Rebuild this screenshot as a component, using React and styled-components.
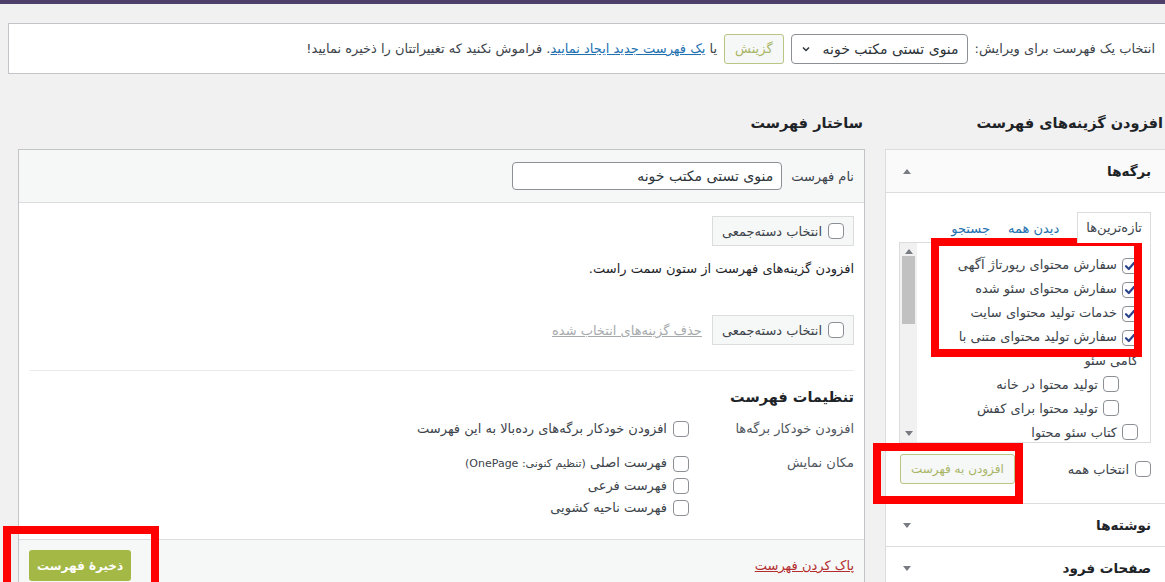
import React from "react";
import styled, { createGlobalStyle } from "styled-components";

const Global = createGlobalStyle`
  html, body {
    margin: 0;
    padding: 0;
    background: #f1f1f1;
    overflow: hidden;
  }
  body {
    font-family: "DejaVu Sans", "Noto Sans", sans-serif;
    font-size: 13px;
    color: #3c434a;
  }
`;

const Root = styled.div`
  position: relative;
  height: 582px;
  overflow: hidden;
  direction: rtl;
`;

const AdminBar = styled.div`
  height: 4px;
  background: #4f3f6b;
`;

const Wrap = styled.div`
  padding: 19px 0 0 8px;
`;

const Notice = styled.div`
  display: flex;
  align-items: center;
  gap: 7px;
  height: 49px;
  padding: 0 10px;
  background: #fff;
  border: 1px solid #c3c4c7;
  margin-right: -1px;
  white-space: nowrap;
`;

const FakeSelect = styled.div`
  display: flex;
  align-items: center;
  justify-content: space-between;
  width: 158px;
  height: 28px;
  padding: 0 8px 0 9px;
  border: 1px solid #8c8f94;
  border-radius: 4px;
  font-size: 14px;
  color: #2c3338;
`;

const GhostButton = styled.span`
  display: inline-flex;
  align-items: center;
  justify-content: center;
  height: 28px;
  padding: 0 10px;
  border: 1px solid #b9c584;
  border-radius: 3px;
  background: #f6f7f7;
  color: #a9b667;
  font-size: 13px;
`;

const Link = styled.a`
  color: ${(p) => p.$color || "#2271b1"};
  text-decoration: underline;
  cursor: pointer;
`;

const Columns = styled.div`
  display: flex;
  align-items: flex-start;
  gap: 20px;
  margin-left: 10px;
`;

const Column = styled.div`
  display: flex;
  flex-direction: column;
  width: ${(p) => (p.$width ? p.$width + "px" : "auto")};
  flex: ${(p) => (p.$width ? "none" : "1")};
`;

const Heading = styled.h2`
  margin: 38px 2px 15px 0;
  font-size: 14.5px;
  line-height: 22px;
  font-weight: 700;
  color: #1d2327;
`;

/* right column: accordion of item sources */

const Accordion = styled.div`
  background: #fff;
  border: 1px solid #dcdcde;
  border-right: none;
`;

const SectionHeader = styled.div`
  display: flex;
  align-items: center;
  justify-content: space-between;
  height: 42px;
  padding: 0 14px 0 17px;
  background: ${(p) => (p.$open ? "#fafafa" : "#fff")};
  border-top: ${(p) => (p.$first ? "none" : "1px solid #dcdcde")};
  font-size: 13.5px;
  font-weight: 700;
  color: #1d2327;
`;

const Arrow = styled.span`
  width: 0;
  height: 0;
  border-left: 4px solid transparent;
  border-right: 4px solid transparent;
  border-${(p) => (p.$up ? "bottom" : "top")}: 5px solid #787c82;
`;

const SectionBody = styled.div`
  border-top: 1px solid #dcdcde;
  padding: 19px 14px 19px 13px;
`;

const Tabs = styled.div`
  display: flex;
  align-items: flex-end;
  gap: 18px;
  height: 30px;
`;

const Tab = styled.span`
  display: flex;
  align-items: center;
  height: 29px;
  padding: 0 8px;
  border: 1px solid #dcdcde;
  border-bottom: 1px solid #fff;
  margin-bottom: -1px;
  background: #fff;
  color: #3c434a;
  position: relative;
  z-index: 1;
`;

const TabLink = styled.a`
  color: #2271b1;
  text-decoration: none;
  line-height: 22px;
  padding-bottom: 2px;
`;

const ListBox = styled.div`
  display: flex;
  height: 199px;
  border: 1px solid #dcdcde;
  overflow: hidden;
`;

const ListContent = styled.ul`
  flex: 1;
  list-style: none;
  margin: 0;
  padding: 10px 12px 0 0;
  overflow: hidden;
  text-align: right;
`;

const SubList = styled.ul`
  list-style: none;
  margin: 0 19px 0 0;
  padding: 0;
`;

const Item = styled.li`
  display: block;
  line-height: 24px;
  font-size: 13px;
  color: #3c434a;
  & > span:first-child {
    display: inline-flex;
    vertical-align: -3px;
    margin-left: 5px;
  }
`;

const WrappedLine = styled.span`
  display: block;
  text-align: right;
`;

const Scrollbar = styled.div`
  display: flex;
  flex-direction: column;
  align-items: center;
  justify-content: space-between;
  width: 17px;
  background: #f1f1f1;
  padding: 6px 0;
  box-sizing: border-box;
`;

const ScrollThumb = styled.div`
  width: 13px;
  height: 68px;
  background: #c1c1c1;
  margin-top: 2px;
`;

const ScrollTrack = styled.div`
  flex: 1;
  display: flex;
  flex-direction: column;
  align-items: center;
`;

const FooterRow = styled.div`
  display: flex;
  align-items: center;
  justify-content: space-between;
  margin-top: 11px;
`;

const CheckLabel = styled.label`
  display: inline-flex;
  align-items: center;
  gap: 6px;
  color: #3c434a;
  font-size: 13px;
`;

const AddButton = styled(GhostButton)`
  height: 28px;
  padding: 0 10px;
  margin-left: 1px;
  font-size: 12px;
`;

const Box = styled.span`
  display: inline-flex;
  align-items: center;
  justify-content: center;
  flex: none;
  width: 14px;
  height: 14px;
  border: 1px solid #8c8f94;
  border-radius: 4px;
  background: #fff;
`;

const Checkbox = ({ checked }) => (
  <Box>
    {checked && (
      <svg width="12" height="12" viewBox="0 0 12 12">
        <path d="M2 6.2 L4.8 9 L10.2 2.8" fill="none" stroke="#2f4490" strokeWidth="2.2" strokeLinecap="round" strokeLinejoin="round" />
      </svg>
    )}
  </Box>
);

/* left column: menu structure */

const Panel = styled.div`
  background: #fff;
  border: 1px solid #c3c4c7;
`;

const PanelHeader = styled.div`
  display: flex;
  align-items: center;
  gap: 9px;
  height: 52px;
  padding: 0 10px;
  background: #f6f7f7;
  border-bottom: 1px solid #dcdcde;
`;

const NameInput = styled.div`
  display: flex;
  align-items: center;
  width: 252px;
  height: 26px;
  padding: 0 8px;
  border: 1px solid #8c8f94;
  border-radius: 4px;
  background: #fff;
  font-size: 14px;
  color: #2c3338;
`;

const PanelBody = styled.div`
  padding: 13px 10px 20px;
`;

const BulkRow = styled.div`
  display: flex;
  align-items: center;
  gap: 10px;
  margin-top: ${(p) => p.$top || 0}px;
`;

const BulkBox = styled.label`
  display: inline-flex;
  align-items: center;
  gap: 6px;
  height: 28px;
  padding: 0 9px;
  background: #f6f7f7;
  border: 1px solid #dcdcde;
  color: #3c434a;
`;

const Hint = styled.p`
  margin: 13px 0 0;
  line-height: 20px;
  color: #1d2327;
`;

const Separator = styled.hr`
  border: none;
  border-top: 1px solid #ececec;
  margin: 25px 0 0;
`;

const SettingsTitle = styled.h3`
  margin: 14px 0 0;
  font-size: 14.5px;
  line-height: 24px;
  font-weight: 700;
  color: #1d2327;
`;

const SettingsGrid = styled.div`
  display: grid;
  grid-template-columns: 165px 1fr;
  row-gap: 12px;
  margin-top: 9px;
`;

const SettingLabel = styled.div`
  line-height: 22px;
  color: #50575e;
`;

const Options = styled.div`
  display: flex;
  flex-direction: column;
`;

const Option = styled.label`
  display: flex;
  align-items: center;
  gap: 6px;
  line-height: 22px;
  color: #3c434a;
`;

const Small = styled.span`
  font-size: 11px;
  color: #3c434a;
`;

const PanelFooter = styled.div`
  display: flex;
  align-items: center;
  justify-content: space-between;
  padding: 10px 10px 20px;
  background: #f6f7f7;
  border-top: 1px solid #dcdcde;
`;

const SaveButton = styled.span`
  display: inline-flex;
  align-items: center;
  justify-content: center;
  height: 31px;
  padding: 0 8px;
  background: #a4b845;
  border-radius: 3px;
  color: #fff;
  font-weight: 700;
  font-size: 12px;
`;

/* red annotation frames drawn over the screenshot */
const Frame = styled.div`
  position: absolute;
  left: ${(p) => p.$x}px;
  top: ${(p) => p.$y}px;
  width: ${(p) => p.$w}px;
  height: ${(p) => p.$h}px;
  border: 8px solid #ff0000;
  box-sizing: border-box;
  pointer-events: none;
`;

export default function App() {
  return (
    <Root>
      <Global />
      <AdminBar />
      <Wrap>
        <Notice>
          <span>انتخاب یک فهرست برای ویرایش:</span>
          <FakeSelect>
            <span>منوی تستی مکتب خونه</span>
            <svg width="10" height="10" viewBox="0 0 10 10">
              <path d="M2 3.5 L5 6.5 L8 3.5" fill="none" stroke="#2c3338" strokeWidth="1.5" />
            </svg>
          </FakeSelect>
          <GhostButton>گزینش</GhostButton>
          <span>
            یا <Link>یک فهرست جدید ایجاد نمایید</Link>. فراموش نکنید که تغییراتتان را ذخیره نمایید!
          </span>
        </Notice>

        <Columns>
          <Column $width={280}>
            <Heading>افزودن گزینه‌های فهرست</Heading>
            <Accordion>
              <SectionHeader $first $open>
                <span>برگه‌ها</span>
                <Arrow $up />
              </SectionHeader>
              <SectionBody>
                <Tabs>
                  <Tab>تازه‌ترین‌ها</Tab>
                  <TabLink>دیدن همه</TabLink>
                  <TabLink>جستجو</TabLink>
                </Tabs>
                <ListBox>
                  <ListContent>
                    <Item><Checkbox checked /><span>سفارش محتوای رپورتاژ آگهی</span></Item>
                    <Item><Checkbox checked /><span>سفارش محتوای سئو شده</span></Item>
                    <Item><Checkbox checked /><span>خدمات تولید محتوای سایت</span></Item>
                    <Item>
                      <Checkbox checked />
                      <span>سفارش تولید محتوای متنی با</span>
                      <WrappedLine>کامی سئو</WrappedLine>
                    </Item>
                    <SubList>
                      <Item><Checkbox /><span>تولید محتوا در خانه</span></Item>
                      <Item><Checkbox /><span>تولید محتوا برای کفش</span></Item>
                    </SubList>
                    <Item><Checkbox /><span>کتاب سئو محتوا</span></Item>
                  </ListContent>
                  <Scrollbar>
                    <ScrollTrack>
                      <Arrow $up />
                      <ScrollThumb />
                    </ScrollTrack>
                    <Arrow />
                  </Scrollbar>
                </ListBox>
                <FooterRow>
                  <CheckLabel><Checkbox />انتخاب همه</CheckLabel>
                  <AddButton>افزودن به فهرست</AddButton>
                </FooterRow>
              </SectionBody>
              <SectionHeader>
                <span>نوشته‌ها</span>
                <Arrow />
              </SectionHeader>
              <SectionHeader>
                <span>صفحات فرود</span>
                <Arrow />
              </SectionHeader>
            </Accordion>
          </Column>

          <Column>
            <Heading>ساختار فهرست</Heading>
            <Panel>
              <PanelHeader>
                <span>نام فهرست</span>
                <NameInput>منوی تستی مکتب خونه</NameInput>
              </PanelHeader>
              <PanelBody>
                <BulkRow>
                  <BulkBox><Checkbox />انتخاب دسته‌جمعی</BulkBox>
                </BulkRow>
                <Hint>افزودن گزینه‌های فهرست از ستون سمت راست.</Hint>
                <BulkRow $top={36}>
                  <BulkBox><Checkbox />انتخاب دسته‌جمعی</BulkBox>
                  <Link $color="#a7aaad">حذف گزینه‌های انتخاب شده</Link>
                </BulkRow>
                <Separator />
                <SettingsTitle>تنظیمات فهرست</SettingsTitle>
                <SettingsGrid>
                  <SettingLabel>افزودن خودکار برگه‌ها</SettingLabel>
                  <Options>
                    <Option><Checkbox />افزودن خودکار برگه‌های رده‌بالا به این فهرست</Option>
                  </Options>
                  <SettingLabel>مکان نمایش</SettingLabel>
                  <Options>
                    <Option><Checkbox /><span>فهرست اصلی <Small>(تنظیم کنونی: OnePage)</Small></span></Option>
                    <Option><Checkbox />فهرست فرعی</Option>
                    <Option><Checkbox />فهرست ناحیه کشویی</Option>
                  </Options>
                </SettingsGrid>
              </PanelBody>
              <PanelFooter>
                <Link $color="#b32d2e">پاک کردن فهرست</Link>
                <SaveButton>ذخیرهٔ فهرست</SaveButton>
              </PanelFooter>
            </Panel>
          </Column>
        </Columns>
      </Wrap>

      <Frame $x={931} $y={238} $w={211} $h={119} />
      <Frame $x={873} $y={443} $w={150} $h={61} />
      <Frame $x={3} $y={526} $w={156} $h={70} />
    </Root>
  );
}
